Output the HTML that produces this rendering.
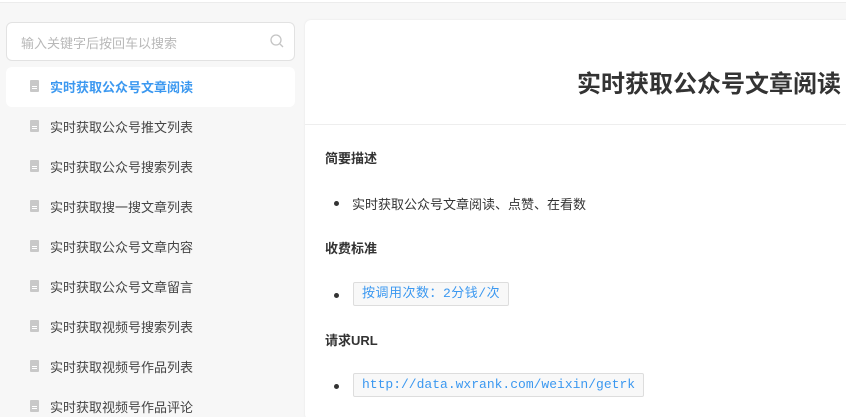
<!DOCTYPE html>
<html><head><meta charset="utf-8"><style>
html,body{margin:0;width:846px;height:417px;overflow:hidden}
body{background:#f7f7f7;font-family:"Liberation Sans","Noto Sans CJK SC",sans-serif;position:relative}
.top{position:absolute;left:0;top:0;width:846px;height:2px;background:#fff;border-bottom:1px solid #ececec}
.search{position:absolute;left:6px;top:22px;width:287px;height:37px;background:#fff;border:1px solid #e2e2e2;border-radius:6px}
.search span{position:absolute;left:14px;top:10px;font-size:13px;color:#b8b8b8}
.search svg{position:absolute;right:10px;top:11px}
.item{position:absolute;left:6px;width:289px;height:40px;font-size:13px;color:#444}
.item.act{background:#fff;border-radius:6px;color:#3b98f0;font-weight:bold}
.item i{position:absolute;left:24px;top:13px;width:9px;height:12px;background:#c8c8c8;border-radius:1px}
.item i:after{content:"";position:absolute;left:2px;top:6px;width:5px;height:1px;background:#fff;box-shadow:0 2px 0 #fff}
.item span{position:absolute;left:44px;top:10px}
.panel{position:absolute;left:305px;top:20px;width:560px;height:400px;background:#fff;border-radius:6px;box-shadow:0 0 2px #e5e5e5}
.title{position:absolute;left:272px;top:44px;font-size:24px;font-weight:bold;color:#333;white-space:nowrap}
.hr{position:absolute;left:0;top:104px;width:560px;height:1px;background:#eee}
.h{position:absolute;left:20px;font-size:13px;font-weight:bold;color:#333}
.li{position:absolute;left:33px;font-size:13px;color:#333}
.li:before{content:"";position:absolute;left:-4px;top:7px;width:5px;height:5px;border-radius:50%;background:#333}
.li span{position:absolute;left:14px;top:0;white-space:nowrap}
.code{position:absolute;left:48px;height:22px;border:1px solid #ddd;border-radius:2px;background:#f8f8f8;color:#3b98f0;font-family:"Liberation Mono","Noto Sans CJK SC",monospace;font-size:13px;line-height:22px;padding:0 8px;white-space:nowrap}
</style></head><body>
<div class="top"></div>
<div class="search"><span>输入关键字后按回车以搜索</span><svg width="14" height="14" viewBox="0 0 14 14"><circle cx="6" cy="6" r="5" fill="none" stroke="#c4c4c4" stroke-width="1.3"/><path d="M10 10l3 3" stroke="#c4c4c4" stroke-width="1.3"/></svg></div>
<div class="item act" style="top:67px"><i></i><span>实时获取公众号文章阅读</span></div>
<div class="item" style="top:107px"><i></i><span>实时获取公众号推文列表</span></div>
<div class="item" style="top:147px"><i></i><span>实时获取公众号搜索列表</span></div>
<div class="item" style="top:187px"><i></i><span>实时获取搜一搜文章列表</span></div>
<div class="item" style="top:227px"><i></i><span>实时获取公众号文章内容</span></div>
<div class="item" style="top:267px"><i></i><span>实时获取公众号文章留言</span></div>
<div class="item" style="top:307px"><i></i><span>实时获取视频号搜索列表</span></div>
<div class="item" style="top:347px"><i></i><span>实时获取视频号作品列表</span></div>
<div class="item" style="top:387px"><i></i><span>实时获取视频号作品评论</span></div>
<div class="panel">
<div class="title">实时获取公众号文章阅读</div>
<div class="hr"></div>
<div class="h" style="top:128px">简要描述</div>
<div class="li" style="top:174px"><span>实时获取公众号文章阅读、点赞、在看数</span></div>
<div class="h" style="top:218px">收费标准</div>
<div class="li" style="top:266px"></div>
<div class="code" style="top:262px;padding:0 8px 0 8px;letter-spacing:0.5px">按调用次数：2分钱/次</div>
<div class="h" style="top:310px">请求URL</div>
<div class="li" style="top:357px"></div>
<div class="code" style="top:353px">http://data.wxrank.com/weixin/getrk</div>
</div>
</body></html>
